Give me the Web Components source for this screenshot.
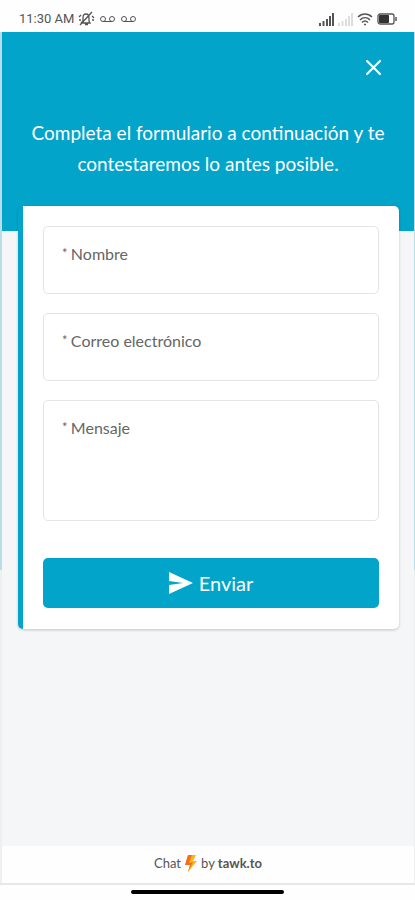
<!DOCTYPE html>
<html lang="es">
<head>
<meta charset="utf-8">
<meta name="viewport" content="width=device-width, initial-scale=1">
<title>Chat</title>
<style>
body { margin: 0; background: #fefefe; font-family: Lato, "Open Sans", sans-serif; --brand: #03a4ca; }
</style>
</head>
<body>
<chat-screen></chat-screen>
<script>
function define(name, html) {
  const template = document.createElement('template');
  template.innerHTML = html;
  customElements.define(name, class extends HTMLElement {
    constructor() {
      super();
      this.attachShadow({ mode: 'open' }).append(template.content.cloneNode(true));
    }
  });
}

define('status-bar', `
<style>
:host { display: flex; align-items: center; justify-content: space-between; height: 32px; padding: 6px 18px 0 19px; box-sizing: border-box; color: #555; font: 13px/16px Roboto, sans-serif; }
div { display: flex; align-items: center; gap: 4px; }
svg { display: block; fill: none; stroke: #555; }
</style>
<div>
  <span>11:30 AM</span>
  <svg width="17" height="16" viewBox="0 0 17 16" stroke-width="1.3" aria-hidden="true"><path d="M3 12h9l-1-2V7c0-3-1-4-3-4S5 4 5 7v3l-2 2M7 13.500h3M14 1 2 14M1 6l2-2M14 5l2 2M1 9h2M14 9h2"/></svg>
  <svg width="17" height="10" viewBox="0 0 17 10" aria-hidden="true"><circle cx="4" cy="5" r="2.500"/><circle cx="13" cy="5" r="2.500"/><path d="M4 7.500h9"/></svg>
  <svg width="17" height="10" viewBox="0 0 17 10" aria-hidden="true"><circle cx="4" cy="5" r="2.500"/><circle cx="13" cy="5" r="2.500"/><path d="M4 7.500h9"/></svg>
</div>
<div>
  <svg width="15" height="13" viewBox="0 0 15 13" stroke-width="2" aria-hidden="true"><path d="M1 13v-3M4.500 13V8M8 13V6M11 13V3M14 13V0"/></svg>
  <svg width="15" height="13" viewBox="0 0 15 13" stroke-width="2" aria-hidden="true" style="stroke:#ddd"><path d="M1 13v-3M4.500 13V8M8 13V6M11 13V3M14 13V0"/></svg>
  <svg width="16" height="14" viewBox="0 0 16 14" stroke-width="1.500" aria-hidden="true"><path d="M1 5c4-4 10-4 14 0M3 8c3-3 7-3 10 0M5 10.500c2-2 4-2 6 0M7 12.500h2"/></svg>
  <svg width="20" height="12" viewBox="0 0 20 12" aria-hidden="true"><rect x="1" y="1" width="16" height="10" rx="2" stroke-width="1.300"/><path d="M2.500 2.500h9v7h-9z" fill="#333" stroke="#333"/><path d="M19 4v4" stroke-width="1.500"/></svg>
</div>`);

define('chat-header', `
<style>
:host { display: block; box-sizing: border-box; background: var(--brand); color: #fff; padding: 23px 28px 52px; }
.bar { display: flex; justify-content: flex-end; }
button { width: 24px; height: 24px; padding: 0; border: 0; background: none; color: inherit; }
svg { display: block; }
p { margin: 38px 0 0; font-size: 19px; line-height: 31px; text-align: center; }
</style>
<div class="bar"><button type="button" aria-label="Cerrar"><svg width="24" height="24" viewBox="0 0 24 24" fill="none" stroke="currentColor" stroke-width="2.200" stroke-linecap="round" aria-hidden="true"><path d="m5 6 13 13M18 6 5 19"/></svg></button></div>
<p><slot></slot></p>`);

class FormField extends HTMLElement {
  connectedCallback() {
    if (this.shadowRoot) return;
    const multi = this.hasAttribute('multiline');
    const type = this.getAttribute('type') || 'text';
    this.attachShadow({ mode: 'open' }).innerHTML = `
<style>
:host { display: flex; flex-direction: column; box-sizing: border-box; border: 1px solid #e4e4e6; border-radius: 5px; padding: 17px 18px 4px; color: #666; }
label { font-size: 16px; line-height: 20px; }
small { font-size: 13px; line-height: 16px; vertical-align: 2px; }
input, textarea { display: block; box-sizing: border-box; width: 100%; height: 25px; margin: 0; padding: 0; border: 0; outline: 0; resize: none; background: none; color: #333; font: inherit; font-size: 16px; }
textarea { height: 78px; }
</style>
<label for="control"><small>* </small><span></span></label>
${multi ? '<textarea id="control" required></textarea>' : `<input id="control" type="${type}" required>`}`;
    this.shadowRoot.querySelector('span').textContent = this.getAttribute('label');
  }
}
customElements.define('form-field', FormField);

define('send-button', `
<style>
:host { display: block; }
button { display: flex; align-items: center; justify-content: center; gap: 6px; width: 100%; height: 50px; padding: 0; border: 0; border-radius: 5px; background: var(--brand); color: #fff; font: inherit; font-size: 20px; line-height: 24px; }
</style>
<button type="submit"><svg width="24" height="22" viewBox="0 0 24 22" fill="currentColor" aria-hidden="true"><path d="M0 0 24 11 0 22V13l14-2L0 9z"/></svg><span><slot></slot></span></button>`);

define('contact-form', `
<style>
:host { display: block; position: relative; margin: -25px 15px 0 16px; }
form { display: flex; flex-direction: column; gap: 19px; padding: 20px 20px 21px; background: #fff; border-left: 5px solid var(--brand); border-radius: 5px; box-shadow: 0 1px 3px #0003; }
send-button { margin-top: 18px; }
</style>
<form>
  <form-field label="Nombre"></form-field>
  <form-field label="Correo electrónico" type="email"></form-field>
  <form-field label="Mensaje" multiline></form-field>
  <send-button>Enviar</send-button>
</form>`);

define('chat-footer', `
<style>
:host { display: flex; justify-content: center; align-items: center; height: 37px; box-sizing: border-box; padding-bottom: 3px; background: #fefefe; color: #555; font-size: 13px; line-height: 16px; }
a { display: flex; align-items: center; gap: 4px; color: inherit; text-decoration: none; }
b { font-weight: 700; }
</style>
<a href="#"><span>Chat</span><svg width="12" height="17" viewBox="0 0 12 17" aria-hidden="true"><path d="M3 0h8L8 6h4L3 17l2-7H0z" fill="#fdb515"/><path d="M3 0h4L4 8l4-1-5 10 2-7H0z" fill="#f0701f"/></svg><span>by <b>tawk.to</b></span></a>`);

define('chat-screen', `
<style>
:host { display: flex; flex-direction: column; min-height: 100vh; }
main { flex: 1; display: flex; flex-direction: column; padding: 0 1px 0 2px; border-bottom: 2px solid #e7e8ea; background: linear-gradient(#b9dee8 538px, #eeeff1 538px); }
.body { flex: 1; background: #f5f6f8; }
.home { height: 15px; box-sizing: border-box; padding-top: 5px; }
.home::before { content: ""; display: block; width: 37%; height: 4px; margin: 0 auto; border-radius: 2px; background: #000; }
</style>
<status-bar></status-bar>
<main>
  <chat-header>Completa el formulario a continuación y te contestaremos lo antes posible.</chat-header>
  <div class="body"><contact-form></contact-form></div>
  <chat-footer></chat-footer>
</main>
<div class="home"></div>`);
</script>
</body>
</html>
